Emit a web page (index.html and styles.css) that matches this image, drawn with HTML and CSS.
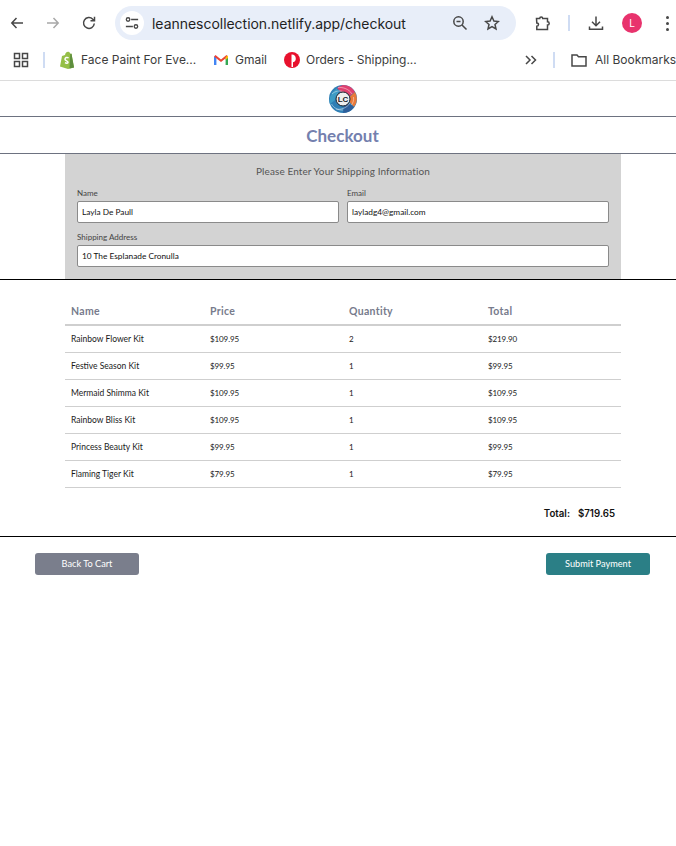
FILE: index.html
```html
<!DOCTYPE html>
<html lang="en">
<head>
<meta charset="utf-8">
<title>Checkout</title>
<link rel="stylesheet" href="styles.css">
</head>
<body>
<header class="chrome">
  <div class="toolbar">
    <svg class="ic nav-first" viewBox="0 0 16 16"><path d="M14 8H3M7.500 3 2.800 8l4.700 5" class="st"/></svg>
    <svg class="ic nav-off" viewBox="0 0 16 16"><path d="M2 8h11M8.500 3l4.700 5-4.700 5" class="st"/></svg>
    <svg class="ic nav-reload" viewBox="0 0 16 16"><path d="M13.300 8.500A5.400 5.400 0 1 1 11.800 4.200L13.500 5.800M13.500 1.800v4h-4" class="st"/></svg>
    <div class="omnibox">
      <span class="tune"><svg viewBox="0 0 16 16" width="14" height="14"><circle cx="3.500" cy="4" r="2" class="st"/><path d="M7 4h8M1 12h8" class="st"/><circle cx="12.500" cy="12" r="2" class="st"/></svg></span>
      <span class="url">leannescollection.netlify.app/checkout</span>
      <svg class="ic zoom-ic" viewBox="0 0 16 16"><circle cx="6.500" cy="6.500" r="4.700" class="st"/><path d="M10 10l4.500 4.500M4.500 6.500h4" class="st"/></svg>
      <svg class="ic star-ic" viewBox="0 0 16 16"><path d="M8 1.800l1.900 4.200 4.500.5-3.400 3 1 4.500L8 11.700 4 14l1-4.500-3.400-3 4.500-.5z" class="st"/></svg>
    </div>
    <svg class="ic ext-ic" viewBox="0 0 16 16"><path d="M1.500 3.500h3.200a1.500 1.500 0 0 1 3 0h4.800v3.200a1.700 1.700 0 0 1 0 3.400v4.400H1.800v-3.200a1.700 1.700 0 0 0 0-3.400z" class="st"/></svg>
    <span class="sep"></span>
    <svg class="ic dl-ic" viewBox="0 0 16 16"><path d="M8 1.500v9M4 6.800 8 10.800l4-4M1.500 11.500v2.800h13v-2.800" class="st"/></svg>
    <span class="avatar">L</span>
    <span class="dots"><i></i><i></i><i></i></span>
  </div>
  <div class="bookmarks">
    <svg class="ic apps" viewBox="0 0 16 16"><path d="M1.500 1.500h5v5h-5zM9.500 1.500h5v5h-5zM1.500 9.500h5v5h-5zM9.500 9.500h5v5h-5z" class="st"/></svg>
    <span class="sep sep-left"></span>
    <span class="bm bm-shop">
      <svg class="bm-ic" viewBox="0 0 16 18"><path d="M1 15.500 3 5l3-1C6.500 1.500 8 .5 9.500.8 10.500 1 11 2 11.300 2.800L12.500 2.700 15 16.500 9 18z" fill="#95bf47"/><path d="M11.300 2.800 12.500 2.700 15 16.500 10.500 17.500z" fill="#5e8e3e"/><path d="M9.600 6.800C8 6 6 6.500 6 8.200c0 1.800 3 1.500 3 3 0 1.200-1.700 1.200-3 .4" fill="none" stroke="#fff" stroke-width="1.500"/></svg>
      Face Paint For Eve...
    </span>
    <span class="bm bm-gmail">
      <svg class="bm-ic" viewBox="0 0 16 12"><path d="M1 11V2.500L3.400 3v8z" fill="#4285f4"/><path d="M15 11V2.500L12.600 3v8z" fill="#34a853"/><path d="M1 2.500 2.500 1 8 5.500 13.500 1 15 2.500 8 8z" fill="#ea4335"/><path d="M12.600 3 15 1.500V4l-2.400 2z" fill="#fbbc04"/></svg>
      Gmail
    </span>
    <span class="bm bm-orders">
      <svg class="bm-ic" viewBox="0 0 16 16"><circle cx="8" cy="8" r="8" fill="#e8112d"/><path d="M8 2.500a4 4 0 0 1 1 7.800V15H7.500V2.500z" fill="#fff"/></svg>
      Orders - Shipping...
    </span>
    <svg class="more" viewBox="0 0 12 10"><path d="M1 1l4 4-4 4M6.500 1l4 4-4 4" class="st"/></svg>
    <span class="sep sep-right"></span>
    <span class="bm bm-all">
      <svg class="bm-ic folder" viewBox="0 0 16 14"><path d="M1 2h5l1.500 1.800H15V13H1z" class="st"/></svg>
      All Bookmarks
    </span>
  </div>
</header>

<main class="page">
  <div class="logo-row">
    <svg class="logo" viewBox="0 0 28 28">
      <circle cx="14" cy="14" r="14" fill="#2f7fb5"/>
      <path d="M14 0a14 14 0 0 1 12 7L18 13 8 3a14 14 0 0 1 6-3z" fill="#e0406f"/>
      <path d="M26 7a14 14 0 0 1-1 15l-7-8z" fill="#e9793a"/>
      <path d="M25 22a14 14 0 0 1-11 6l2-12z" fill="#2d5e9a"/>
      <path d="M8 3 3 8a14 14 0 0 0-2 11l9-7z" fill="#3d9bc4"/>
      <path d="M9 2.500C14 2 20 4 23 9M3 9c3-3 8-4 12-2M2.500 19C5 23 9 25.500 14 25M7 24c5 1 11-1 14-6M24.500 12c.5 3-.5 6-2 8" fill="none" stroke="#fff" stroke-opacity=".55" stroke-width=".8"/>
      <circle cx="14" cy="14" r="7" fill="#eeeeee" stroke="#16202c" stroke-width="1"/>
      <text x="14" y="17" class="logo-text">LC</text>
    </svg>
  </div>
  <h1 class="title">Checkout</h1>

  <section class="form-band">
    <form class="form">
      <h2 class="form-title">Please Enter Your Shipping Information</h2>
      <div class="form-grid">
        <label class="field">Name<span class="input">Layla De Paull</span></label>
        <label class="field">Email<span class="input">layladg4@gmail.com</span></label>
        <label class="field field-wide">Shipping Address<span class="input">10 The Esplanade Cronulla</span></label>
      </div>
    </form>
  </section>

  <section class="order">
    <table class="table">
      <thead>
        <tr><th>Name</th><th>Price</th><th>Quantity</th><th>Total</th></tr>
      </thead>
      <tbody>
        <tr><td>Rainbow Flower Kit</td><td class="num">$109.95</td><td class="num">2</td><td class="num">$219.90</td></tr>
        <tr><td>Festive Season Kit</td><td class="num">$99.95</td><td class="num">1</td><td class="num">$99.95</td></tr>
        <tr><td>Mermaid Shimma Kit</td><td class="num">$109.95</td><td class="num">1</td><td class="num">$109.95</td></tr>
        <tr><td>Rainbow Bliss Kit</td><td class="num">$109.95</td><td class="num">1</td><td class="num">$109.95</td></tr>
        <tr><td>Princess Beauty Kit</td><td class="num">$99.95</td><td class="num">1</td><td class="num">$99.95</td></tr>
        <tr><td>Flaming Tiger Kit</td><td class="num">$79.95</td><td class="num">1</td><td class="num">$79.95</td></tr>
      </tbody>
    </table>
    <p class="grand"><span>Total:</span><span>$719.65</span></p>
  </section>

  <div class="actions">
    <button class="btn btn-back" type="button">Back To Cart</button>
    <button class="btn btn-pay" type="button">Submit Payment</button>
  </div>
</main>
</body>
</html>
```
FILE: styles.css
```css
* { box-sizing: border-box; }
html, body { margin: 0; padding: 0; background: #fff; }
body { font-family: "Lato", sans-serif; color: #111; width: 676px; height: 846px; overflow: hidden; }

.st { fill: none; stroke: #474747; stroke-width: 1.500; }

.chrome { height: 81px; border-bottom: 1px solid #dcdcdc; font-family: "Inter", sans-serif; color: #3c3c3c; }
.toolbar { height: 46px; display: flex; align-items: center; position: relative; }
.ic { width: 16px; height: 16px; flex: none; }
.nav-first { margin-left: 9px; }
.nav-off { margin-left: 20px; }
.nav-off .st { stroke: #a8a8a8; }
.nav-reload { margin-left: 20px; }
.omnibox { margin-left: 18px; width: 401px; height: 34px; border-radius: 17px; background: #e8eef9; display: flex; align-items: center; padding-left: 5px; flex: none; }
.tune { width: 24px; height: 24px; border-radius: 50%; background: #fff; display: flex; align-items: center; justify-content: center; flex: none; }
.url { margin-left: 8px; font-size: 14px; letter-spacing: -0.03px; color: #1f1f1f; white-space: nowrap; width: 288px; }
.zoom-ic { margin-left: 12px; }
.star-ic { margin-left: 16px; }
.ext-ic { margin-left: 19px; }
.sep { display: block; width: 2px; height: 16px; background: #cfdcf3; flex: none; }
.toolbar .sep { margin-left: 17px; }
.dl-ic { margin-left: 18px; }
.avatar { margin-left: 18px; width: 20px; height: 20px; border-radius: 50%; background: #e8336d; color: #fff; font-size: 10px; display: flex; align-items: center; justify-content: center; flex: none; }
.dots { margin-left: 24px; display: flex; flex-direction: column; gap: 3px; }
.dots i { display: block; width: 3px; height: 3px; border-radius: 50%; background: #474747; }

.bookmarks { height: 34px; display: flex; align-items: center; font-size: 12px; white-space: nowrap; overflow: hidden; padding-bottom: 7px; }
.apps { margin-left: 13px; }
.sep-left { margin-left: 14px; }
.sep-right { margin-left: 16px; }
.bm { display: flex; align-items: center; gap: 6px; flex: none; }
.bm-ic { flex: none; }
.bm-shop { margin-left: 14px; width: 139px; }
.bm-shop .bm-ic { width: 16px; height: 18px; }
.bm-gmail { margin-left: 15px; }
.bm-gmail .bm-ic { width: 16px; height: 12px; }
.bm-orders { margin-left: 17px; letter-spacing: -0.02px; width: 133px; }
.bm-orders .bm-ic { width: 16px; height: 16px; }
.more { margin-left: 108px; width: 12px; height: 10px; flex: none; }
.bm-all { margin-left: 16px; gap: 8px; }
.folder { width: 16px; height: 14px; }

.page { display: block; }
.logo-row { height: 36px; display: flex; align-items: center; justify-content: center; border-bottom: 1px solid #6d7280; padding-left: 10px; }
.logo { width: 28px; height: 28px; }
.logo-text { font-family: "Liberation Sans", sans-serif; font-size: 8px; font-weight: 700; fill: #16202c; text-anchor: middle; }
.title { margin: 0; height: 37px; border-bottom: 1px solid #6d7280; padding-left: 9px; text-align: center; font-size: 17px; line-height: 38px; font-weight: 700; color: #7480ae; }

.form-band { height: 126px; border-bottom: 1px solid #000; display: flex; justify-content: center; padding-left: 10px; }
.form { width: 556px; height: 125px; background: #d3d3d3; padding: 11px 12px 0; flex: none; }
.form-title { margin: 0 0 11px; font-size: 10px; line-height: 12px; font-weight: 400; text-align: center; color: #555; letter-spacing: 0.1px; }
.form-grid { display: grid; grid-template-columns: 262px 262px; column-gap: 8px; row-gap: 9px; }
.field { display: flex; flex-direction: column; gap: 3px; font-size: 8px; line-height: 10px; color: #444; }
.field-wide { grid-column: 1 / 3; }
.input { height: 22px; background: #fff; border: 1px solid #8a8a8a; border-radius: 2px; padding: 0 4px; font-size: 8.300px; line-height: 20px; color: #111; }

.order { padding: 17px 55px 0 65px; height: 257px; border-bottom: 1px solid #000; }
.table { width: 556px; border-collapse: collapse; table-layout: fixed; }
.table th { height: 28px; padding: 0 0 0 6px; text-align: left; font-size: 10.500px; font-weight: 700; color: #777b8c; border-bottom: 2px solid #cfcfcf; letter-spacing: 0.3px; }
.table td { height: 27px; padding: 0 0 0 6px; font-size: 8.500px; color: #1a1a1a; border-bottom: 1px solid #cfcfcf; }
.table td.num { font-size: 8px; letter-spacing: -0.1px; }
.grand { margin: 20px 6px 0 0; display: flex; justify-content: flex-end; gap: 8px; font-family: "Inter", sans-serif; font-size: 9.700px; line-height: 12px; font-weight: 600; color: #111; }

.actions { display: flex; justify-content: space-between; padding: 16px 26px 0 35px; }
.btn { width: 104px; height: 22px; border: 0; border-radius: 3px; color: #fff; font-family: inherit; font-size: 9.200px; padding: 0 0 2px; }
.btn-back { background: #7a7e8c; }
.btn-pay { background: #2b7f86; }
```
